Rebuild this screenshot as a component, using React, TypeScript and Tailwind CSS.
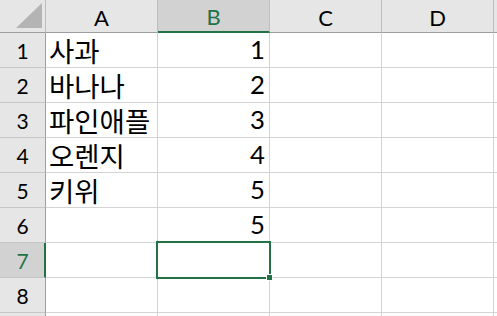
import React from "react";

const rows: [string, number | null][] = [
  ["사과", 1],
  ["바나나", 2],
  ["파인애플", 3],
  ["오렌지", 4],
  ["키위", 5],
  ["", 5],
  ["", null],
  ["", null],
  ["", null],
];

const cols = ["A", "B", "C", "D"];

export default function App() {
  return (
    <div
      className="relative w-[497px] h-[316px] overflow-hidden bg-white text-black"
      style={{ fontFamily: "Lato, 'Noto Sans CJK KR', sans-serif" }}
    >
      <div className="grid grid-cols-[46px_112px_112px_112px_112px_1fr] grid-rows-[33px_repeat(9,35px)]">
        {/* corner */}
        <div className="relative bg-[#e6e6e6] border-r border-b border-r-[#bdbdbd] border-b-[#9e9e9e]">
          <svg className="absolute left-[16px] top-[3px]" width="26" height="25" viewBox="0 0 26 25">
            <polygon points="26,0 26,25 0,25" fill="#b4b4b4" />
          </svg>
        </div>
        {cols.map((c) =>
          c === "B" ? (
            <div
              key={c}
              className="flex items-center justify-center bg-[#d2d2d2] border-r border-r-[#bdbdbd] border-b-2 border-b-[#217346] text-[#217346] text-[22px] leading-none pt-[3px]"
            >
              {c}
            </div>
          ) : (
            <div
              key={c}
              className="flex items-center justify-center bg-[#e6e6e6] border-r border-r-[#bdbdbd] border-b border-b-[#9e9e9e] text-[22px] leading-none pt-[4px]"
            >
              {c}
            </div>
          )
        )}
        <div className="bg-[#e6e6e6] border-b border-b-[#9e9e9e]" />

        {rows.map(([label, num], i) => {
          const r = i + 1;
          const sel = r === 7;
          return (
            <React.Fragment key={r}>
              {sel ? (
                <div className="flex items-end justify-center bg-[#d2d2d2] border-r-2 border-r-[#217346] border-b border-b-[#c6c6c6] text-[#217346] text-[21px] leading-[20px] pb-[6px] pl-[1px]">
                  {r}
                </div>
              ) : (
                <div className="flex items-end justify-center bg-[#e6e6e6] border-r border-r-[#9e9e9e] border-b border-b-[#c6c6c6] text-[21px] leading-[20px] pb-[6px]">
                  {r <= 8 ? r : ""}
                </div>
              )}
              <div
                className="flex items-end border-r border-b border-[#d4d4d4] text-[27.5px] leading-[28px] pl-[3px] pb-[3px] whitespace-nowrap"
                style={{ fontFamily: "'Noto Sans CJK KR', sans-serif" }}
              >
                {label}
              </div>
              <div className="flex items-end justify-end border-r border-b border-[#d4d4d4] text-[25.7px] leading-[26px] pr-[4px] pb-[5px]">
                {num ?? ""}
              </div>
              <div className="border-r border-b border-[#d4d4d4]" />
              <div className="border-r border-b border-[#d4d4d4]" />
              <div className="border-b border-[#d4d4d4]" />
            </React.Fragment>
          );
        })}
      </div>

      {/* selection box */}
      <div className="absolute left-[156px] top-[241px] w-[115px] h-[38px] border-2 border-[#217346]" />
      <div className="absolute left-[266px] top-[274px] w-[7px] h-[7px] bg-[#217346] border border-white" />
    </div>
  );
}
